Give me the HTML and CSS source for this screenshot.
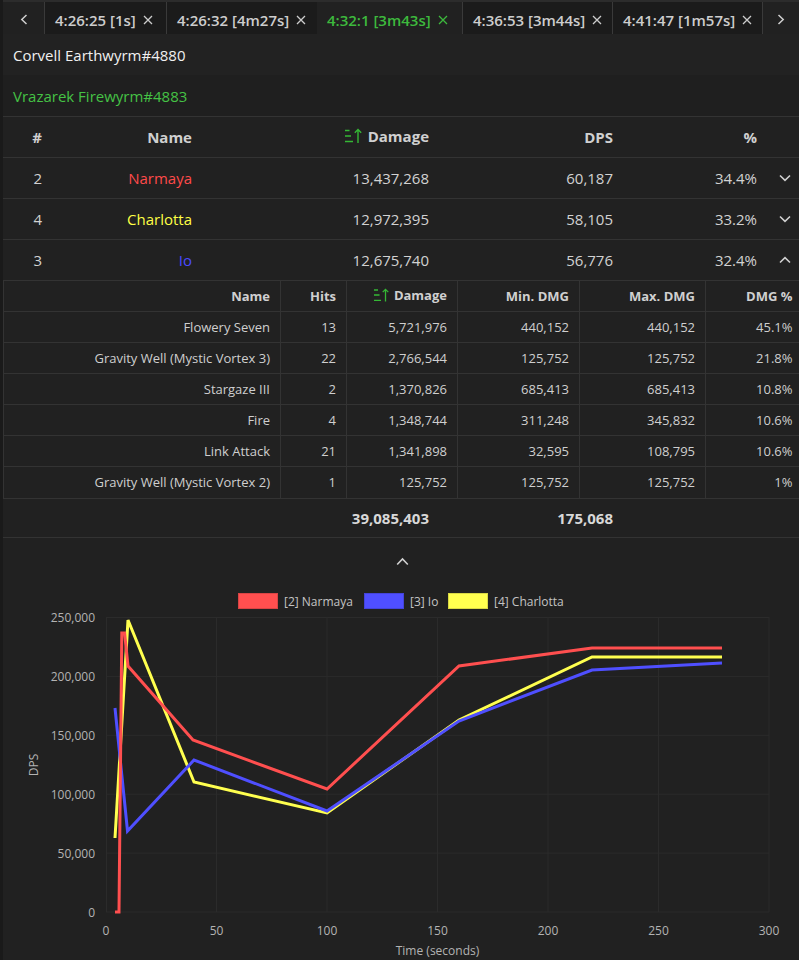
FILE: index.html
```html
<!DOCTYPE html>
<html>
<head>
<meta charset="utf-8">
<title>DPS Meter</title>
<link rel="stylesheet" href="styles.css">
</head>
<body>
<div class="app">
  <nav class="tabs">
    <div class="tab-arrow left"><svg width="8" height="11" viewBox="0 0 8 11"><path d="M6.5 1 L1.8 5.5 L6.5 10" fill="none" stroke="#cfcfcf" stroke-width="1.5"/></svg></div>
    <div class="tab w122"><span>4:26:25 [1s]</span><svg class="x" width="10" height="10" viewBox="0 0 10 10"><path d="M1 1 L9 9 M9 1 L1 9" stroke="currentColor" stroke-width="1.3"/></svg></div>
    <div class="tab noline"><span>4:26:32 [4m27s]</span><svg class="x" width="10" height="10" viewBox="0 0 10 10"><path d="M1 1 L9 9 M9 1 L1 9" stroke="currentColor" stroke-width="1.3"/></svg></div>
    <div class="tab active w146"><span>4:32:1 [3m43s]</span><svg class="x" width="10" height="10" viewBox="0 0 10 10"><path d="M1 1 L9 9 M9 1 L1 9" stroke="currentColor" stroke-width="1.3"/></svg></div>
    <div class="tab"><span>4:36:53 [3m44s]</span><svg class="x" width="10" height="10" viewBox="0 0 10 10"><path d="M1 1 L9 9 M9 1 L1 9" stroke="currentColor" stroke-width="1.3"/></svg></div>
    <div class="tab"><span>4:41:47 [1m57s]</span><svg class="x" width="10" height="10" viewBox="0 0 10 10"><path d="M1 1 L9 9 M9 1 L1 9" stroke="currentColor" stroke-width="1.3"/></svg></div>
    <div class="tab-arrow right"><svg width="8" height="11" viewBox="0 0 8 11"><path d="M1.5 1 L6.2 5.5 L1.5 10" fill="none" stroke="#cfcfcf" stroke-width="1.5"/></svg></div>
  </nav>

  <div class="enc">Corvell Earthwyrm#4880</div>
  <div class="enc selected">Vrazarek Firewyrm#4883</div>

  <table class="main">
    <colgroup>
      <col class="c1"><col class="c2"><col class="c3"><col class="c4"><col class="c5"><col class="c6">
    </colgroup>
    <thead>
      <tr>
        <th>#</th>
        <th>Name</th>
        <th><span class="sorted"><svg class="sort" width="18" height="16" viewBox="0 0 18 16"><path d="M1 2.5 H5.5 M1 8 H7 M1 13.5 H9 M14 15 V1.5 M10.8 4.7 L14 1.5 L17.2 4.7" fill="none" stroke="#35b835" stroke-width="1.4"/></svg>Damage</span></th>
        <th>DPS</th>
        <th>%</th>
        <th></th>
      </tr>
    </thead>
    <tbody>
      <tr>
        <td>2</td><td class="p-red">Narmaya</td><td>13,437,268</td><td>60,187</td><td>34.4%</td>
        <td class="chev"><svg width="12" height="8" viewBox="0 0 12 8"><path d="M1 1.5 L6 6.3 L11 1.5" fill="none" stroke="#d0d0d0" stroke-width="1.6"/></svg></td>
      </tr>
      <tr>
        <td>4</td><td class="p-yellow">Charlotta</td><td>12,972,395</td><td>58,105</td><td>33.2%</td>
        <td class="chev"><svg width="12" height="8" viewBox="0 0 12 8"><path d="M1 1.5 L6 6.3 L11 1.5" fill="none" stroke="#d0d0d0" stroke-width="1.6"/></svg></td>
      </tr>
      <tr>
        <td>3</td><td class="p-blue">Io</td><td>12,675,740</td><td>56,776</td><td>32.4%</td>
        <td class="chev"><svg width="12" height="8" viewBox="0 0 12 8"><path d="M1 6.5 L6 1.7 L11 6.5" fill="none" stroke="#d0d0d0" stroke-width="1.6"/></svg></td>
      </tr>
      <tr class="detail">
        <td colspan="6">
          <table class="sub">
            <colgroup>
              <col class="s1"><col class="s2"><col class="s3"><col class="s4"><col class="s5"><col class="s6">
            </colgroup>
            <thead>
              <tr>
                <th>Name</th>
                <th>Hits</th>
                <th><span class="sorted"><svg class="sort" width="16" height="14" viewBox="0 0 16 14"><path d="M1 2 H5 M1 7 H6.5 M1 12.3 H8 M12.5 13.5 V1.3 M9.7 4.1 L12.5 1.3 L15.3 4.1" fill="none" stroke="#35b835" stroke-width="1.3"/></svg>Damage</span></th>
                <th>Min. DMG</th>
                <th>Max. DMG</th>
                <th>DMG %</th>
              </tr>
            </thead>
            <tbody>
              <tr><td>Flowery Seven</td><td>13</td><td>5,721,976</td><td>440,152</td><td>440,152</td><td>45.1%</td></tr>
              <tr><td>Gravity Well (Mystic Vortex 3)</td><td>22</td><td>2,766,544</td><td>125,752</td><td>125,752</td><td>21.8%</td></tr>
              <tr><td>Stargaze III</td><td>2</td><td>1,370,826</td><td>685,413</td><td>685,413</td><td>10.8%</td></tr>
              <tr><td>Fire</td><td>4</td><td>1,348,744</td><td>311,248</td><td>345,832</td><td>10.6%</td></tr>
              <tr><td>Link Attack</td><td>21</td><td>1,341,898</td><td>32,595</td><td>108,795</td><td>10.6%</td></tr>
              <tr><td>Gravity Well (Mystic Vortex 2)</td><td>1</td><td>125,752</td><td>125,752</td><td>125,752</td><td>1%</td></tr>
            </tbody>
          </table>
        </td>
      </tr>
    </tbody>
    <tfoot>
      <tr><td></td><td></td><td>39,085,403</td><td>175,068</td><td></td><td></td></tr>
    </tfoot>
  </table>

  <div class="chart-toggle"><svg width="13" height="9" viewBox="0 0 13 9"><path d="M1.2 7.5 L6.5 2 L11.8 7.5" fill="none" stroke="#d0d0d0" stroke-width="1.6"/></svg></div>

  <svg class="chart" width="796" height="375" viewBox="3 585 796 375">
    <g class="grid" stroke="#2b2b2b" stroke-width="1">
      <path d="M106 617.5 H769 M106 676.4 H769 M106 735.3 H769 M106 794.2 H769 M106 853.1 H769 M106 912 H769"/>
      <path d="M106.5 617 V912 M216.5 617 V912 M327 617 V912 M437.5 617 V912 M548 617 V912 M658.5 617 V912 M769 617 V912"/>
    </g>
    <g class="legend">
      <rect x="238.5" y="593.5" width="39" height="15" fill="#ff4f4f" stroke="#d94444" stroke-width="1"/>
      <text x="284" y="601">[2] Narmaya</text>
      <rect x="364.5" y="593.5" width="39" height="15" fill="#4f4fff" stroke="#4444d9" stroke-width="1"/>
      <text x="410" y="601">[3] Io</text>
      <rect x="448.5" y="593.5" width="39" height="15" fill="#ffff4f" stroke="#d9d944" stroke-width="1"/>
      <text x="494" y="601">[4] Charlotta</text>
    </g>
    <g class="ylabels">
      <text x="95" y="617">250,000</text>
      <text x="95" y="676">200,000</text>
      <text x="95" y="735">150,000</text>
      <text x="95" y="794">100,000</text>
      <text x="95" y="853">50,000</text>
      <text x="95" y="912">0</text>
    </g>
    <g class="xlabels">
      <text x="106" y="930">0</text>
      <text x="216.5" y="930">50</text>
      <text x="327" y="930">100</text>
      <text x="437.5" y="930">150</text>
      <text x="548" y="930">200</text>
      <text x="658.5" y="930">250</text>
      <text x="769" y="930">300</text>
    </g>
    <text class="axis-title" x="437.5" y="950">Time (seconds)</text>
    <text class="axis-title" x="33" y="765" transform="rotate(-90 33 765)">DPS</text>
    <g class="lines" fill="none" stroke-width="3" stroke-linejoin="miter">
      <polyline stroke="#ffff4f" points="115,838 128,620 194,782 327,813 459,720 592,657 722,657"/>
      <polyline stroke="#4f4fff" points="115,708 127.5,831 194,760 327,811 459,721 592,670 722,663"/>
      <polyline stroke="#ff4f4f" points="115,912 119,912 121.8,633 124.6,633 128,666 193,740 327,789 459,666 592,648 722,648"/>
    </g>
  </svg>
</div>
</body>
</html>
```
FILE: styles.css
```css
* { box-sizing: border-box; }
html, body { margin: 0; padding: 0; }
body {
  background: #1a1a1a;
  width: 799px;
  height: 960px;
  overflow: hidden;
  font-family: "Open Sans", "Noto Sans", sans-serif;
  color: #d2d2d2;
}
.app {
  margin-left: 3px;
  height: 960px;
  background: #212121;
}

/* tabs */
.tabs {
  display: flex;
  height: 34px;
  border-top: 2px solid #2c2c2c;
  background: #1b1b1b;
}
.tab-arrow {
  display: flex;
  align-items: center;
  justify-content: center;
  padding-top: 3px;
  background: #212121;
}
.tab-arrow.left { width: 42px; border-right: 1px solid #3a3a3a; }
.tab-arrow.right { flex: 1; }
.tab {
  flex: none;
  width: 150px;
  display: flex;
  align-items: center;
  padding: 3px 0 0 10px;
  font-size: 15px;
  font-weight: 600;
  color: #cdcdcd;
  white-space: nowrap;
  border-right: 1px solid #3a3a3a;
}
.tab .x { margin-left: 7px; flex: none; }
.tab.w122 { width: 122px; }
.tab.w146 { width: 146px; }
.tab.noline { border-right: none; }
.tab.active { background: #212121; color: #3db93d; }

/* encounters */
.enc {
  height: 41px;
  display: flex;
  align-items: center;
  padding-left: 10px;
  font-size: 15px;
  color: #f0f0f0;
  background: #222222;
}
.enc.selected {
  color: #45c245;
  background: #1f1f1f;
  border-bottom: 1px solid #333333;
  height: 42px;
}

/* main table */
table { border-collapse: collapse; border-spacing: 0; }
.main { width: 796px; table-layout: fixed; font-size: 15px; }
.main .c1 { width: 55px; }
.main .c2 { width: 150px; }
.main .c3 { width: 237px; }
.main .c4 { width: 184px; }
.main .c5 { width: 144px; }
.main .c6 { width: 26px; }
.main > thead > tr > th,
.main > tbody > tr > td,
.main > tfoot > tr > td {
  height: 41px;
  padding: 0 16px 0 0;
  text-align: right;
  border-bottom: 1px solid #333333;
  white-space: nowrap;
}
.main > thead > tr > th { font-weight: 700; color: #d0d0d0; height: 40px; }
.main > tbody > tr > td { color: #d2d2d2; }
.main > tbody > tr > td.chev,
.main > thead > tr > th:last-child { padding: 0; text-align: center; }
.main td.chev svg { display: block; margin: 0 auto 0 6px; }
.main > tfoot > tr > td { font-weight: 700; color: #d8d8d8; height: 39px; }
.sorted { display: inline-flex; align-items: center; }
.sorted .sort { margin-right: 6px; }

.p-red { color: #ff4a4a !important; }
.p-yellow { color: #ffff45 !important; }
.p-blue { color: #4a4aff !important; }

.main > tbody > tr.detail > td { padding: 0; height: auto; }

/* sub table */
.sub { width: 796px; table-layout: fixed; font-size: 13px; }
.sub .s1 { width: 277px; }
.sub .s2 { width: 66px; }
.sub .s3 { width: 111px; }
.sub .s4 { width: 122px; }
.sub .s5 { width: 126px; }
.sub .s6 { width: 94px; }
.sub th, .sub td {
  height: 31px;
  padding: 0 10px 0 0;
  text-align: right;
  white-space: nowrap;
  border-left: 1px solid #333333;
  border-bottom: 1px solid #333333;
}
.sub th:last-child, .sub td:last-child { padding-right: 7px; }
.sub tr:last-child td { border-bottom: none; }
.sub th { font-weight: 700; color: #d0d0d0; }
.sub td { color: #cfcfcf; }
.sub .sorted .sort { margin-right: 5px; }

/* chart */
.chart-toggle {
  height: 47px;
  display: flex;
  justify-content: center;
  padding: 19px 0 0 3px;
}
.chart-toggle svg { display: block; }
.chart { display: block; }
.chart text {
  font-family: "Open Sans", "Noto Sans", sans-serif;
  font-size: 12px;
  fill: #b3b3b3;
  dominant-baseline: central;
}
.chart .legend text { fill: #c4c4c4; }
.chart .ylabels text { text-anchor: end; }
.chart .xlabels text, .chart .axis-title { text-anchor: middle; }
```
